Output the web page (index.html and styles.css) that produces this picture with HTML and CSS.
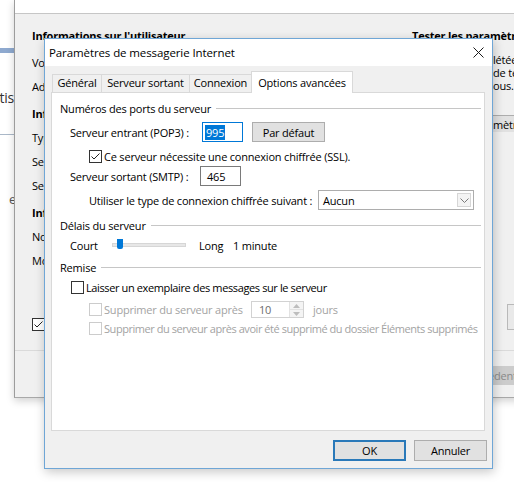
FILE: index.html
```html
<!DOCTYPE html>
<html lang="fr">
<head>
    <meta charset="UTF-8">
    <meta name="viewport" content="width=device-width, initial-scale=1.0">
    <title>Paramètres de messagerie Internet</title>
    <link rel="stylesheet" href="styles.css">
</head>
<body>
    <div class="desk">
        <!-- bits of the window left behind everything -->
        <div class="behind">
            <div class="behind-bar"></div>
            <div class="behind-word">Statis</div>
            <div class="behind-rule"></div>
            <div class="behind-letter">e</div>
        </div>

        <!-- account settings window -->
        <div class="acct">
            <div class="acct-head"></div>
            <div class="acct-body">
                <div class="acct-left">
                    <div class="acct-h first">Informations sur l'utilisateur</div>
                    <div class="acct-row">Votre nom :</div>
                    <div class="acct-row">Adresse de messagerie :</div>
                    <div class="acct-h">Informations sur le serveur</div>
                    <div class="acct-row">Type de compte :</div>
                    <div class="acct-row">Serveur de courrier entrant :</div>
                    <div class="acct-row">Serveur de courrier sortant (SMTP) :</div>
                    <div class="acct-h">Informations de connexion</div>
                    <div class="acct-row">Nom d'utilisateur :</div>
                    <div class="acct-row">Mot de passe :</div>
                    <div class="acct-remember">
                        <span class="box on">
                            <svg width="11" height="11" viewBox="0 0 11 11"><path d="M1.5 5.5L4 8L9.5 2.5" fill="none" stroke="#222" stroke-width="1"/></svg>
                        </span>
                        Mémoriser le mot de passe
                    </div>
                </div>
                <div class="acct-right">
                    <div class="acct-h first">Tester les paramètres du compte</div>
                    <div class="acct-text">
                        <div class="line"><span class="tuck">informations comp</span>létées, nous</div>
                        <div class="line"><span class="tuck">recommandons</span>de tester votre</div>
                        <div class="line"><span class="tuck">bouton ci-dess</span>ous.</div>
                    </div>
                    <div class="acct-btn"><span class="tuck">Tester les para</span>mètres du compte...</div>
                    <div class="acct-more"></div>
                </div>
            </div>
            <div class="acct-foot">
                <div class="acct-btn off"><span class="tuck">&lt; Précé</span>dent</div>
            </div>
        </div>

        <!-- Internet mail settings dialog -->
        <div class="dlg">
            <div class="dlg-title">
                <span>Paramètres de messagerie Internet</span>
                <svg class="close" width="11" height="11" viewBox="0 0 11 11"><path d="M0.5 0.5L10.5 10.5M10.5 0.5L0.5 10.5" stroke="#1a1a1a" stroke-width="1"/></svg>
            </div>
            <div class="dlg-body">
                <div class="tabs">
                    <div class="tab t-general">Général</div>
                    <div class="tab t-smtp">Serveur sortant</div>
                    <div class="tab t-conn">Connexion</div>
                    <div class="tab t-adv active">Options avancées</div>
                </div>

                <div class="panel">
                    <div class="legend">Numéros des ports du serveur</div>

                    <div class="row r-pop">
                        <span class="lbl w-pop">Serveur entrant (POP3) :</span>
                        <span class="field focus"><span class="hl">995</span></span>
                        <span class="btn b-default">Par défaut</span>
                    </div>

                    <div class="check r-ssl">
                        <span class="box on">
                            <svg width="11" height="11" viewBox="0 0 11 11"><path d="M1.5 5.5L4 8L9.5 2.5" fill="none" stroke="#222" stroke-width="1"/></svg>
                        </span>
                        <span>Ce serveur nécessite une connexion chiffrée (SSL).</span>
                    </div>

                    <div class="row r-smtp">
                        <span class="lbl w-smtp">Serveur sortant (SMTP) :</span>
                        <span class="field"><span class="val">465</span></span>
                    </div>

                    <div class="row r-crypt">
                        <span class="lbl w-crypt">Utiliser le type de connexion chiffrée suivant :</span>
                        <span class="combo">
                            <span class="combo-val">Aucun</span>
                            <span class="combo-arrow">
                                <svg width="9" height="5" viewBox="0 0 9 5"><path d="M0.5 0.5L4.5 4.5L8.5 0.5" fill="none" stroke="#7a7a7a" stroke-width="1"/></svg>
                            </span>
                        </span>
                    </div>

                    <div class="legend l-delay">Délais du serveur</div>

                    <div class="row r-slider">
                        <span class="lbl w-court">Court</span>
                        <span class="track"><span class="thumb"></span></span>
                        <span class="lbl w-long">Long</span>
                        <span>1 minute</span>
                    </div>

                    <div class="legend l-remise">Remise</div>

                    <div class="check r-keep">
                        <span class="box"></span>
                        <span class="tight">Laisser un exemplaire des messages sur le serveur</span>
                    </div>

                    <div class="row r-after disabled">
                        <span class="box"></span>
                        <span class="lbl w-after">Supprimer du serveur après</span>
                        <span class="spin">
                            <span class="spin-val">10</span>
                            <span class="spin-btns">
                                <span class="spin-up">
                                    <svg width="7" height="4" viewBox="0 0 7 4"><path d="M0 4L3.5 0L7 4Z" fill="#bdbdbd"/></svg>
                                </span>
                                <span class="spin-down">
                                    <svg width="7" height="4" viewBox="0 0 7 4"><path d="M0 0L3.5 4L7 0Z" fill="#bdbdbd"/></svg>
                                </span>
                            </span>
                        </span>
                        <span class="days">jours</span>
                    </div>

                    <div class="check r-deleted disabled">
                        <span class="box"></span>
                        <span class="tighter">Supprimer du serveur après avoir été supprimé du dossier Éléments supprimés</span>
                    </div>
                </div>

                <div class="actions">
                    <span class="btn b-ok">OK</span>
                    <span class="btn b-cancel">Annuler</span>
                </div>
            </div>
        </div>
    </div>
</body>
</html>
```

FILE: styles.css
```css
body {
    margin: 0;
    padding: 0;
    background-color: #fff;
    font-family: 'Open Sans', 'Noto Sans', sans-serif;
    font-size: 11px;
    letter-spacing: -0.2px;
    color: #000;
}

.desk {
    position: relative;
    width: 514px;
    height: 482px;
    overflow: hidden;
    background-color: #fff;
}

/* window peeking out on the far left */
.behind {
    position: absolute;
    left: 0;
    top: 0;
    width: 14px;
    height: 482px;
}

.behind-bar {
    margin-top: 48px;
    height: 5px;
    background-color: #8ea9cf;
}

.behind-word {
    display: flex;
    justify-content: flex-end;
    margin-top: 37px;
    font-size: 14px;
    line-height: 16px;
    color: #333;
    white-space: nowrap;
}

.behind-rule {
    margin-top: 28px;
    height: 1px;
    background-color: #aab8c8;
}

.behind-letter {
    margin-top: 55px;
    padding-left: 9px;
    font-size: 13px;
    color: #555;
}

/* account settings window */
.acct {
    position: absolute;
    left: 14px;
    top: 0;
    width: 520px;
    height: 398px;
    box-sizing: border-box;
    border-left: 1px solid #9c9c9c;
    border-bottom: 1px solid #a8a8a8;
    background-color: #f0f0f0;
    box-shadow: 0 3px 8px rgba(0, 0, 0, 0.18);
}

.acct-head {
    height: 13px;
    background-color: #fff;
    border-bottom: 1px solid #c6c6c6;
}

.acct-body {
    display: flex;
    height: 336px;
}

.acct-left {
    width: 380px;
    padding-left: 17px;
    padding-top: 15px;
}

.acct-h {
    font-weight: 700;
    height: 24px;
    line-height: 24px;
    margin-top: 3px;
    white-space: nowrap;
}

.acct-h.first {
    height: 14px;
    line-height: 14px;
    margin-top: 0;
    margin-bottom: 8px;
}

.acct-row {
    height: 24px;
    line-height: 24px;
    white-space: nowrap;
}

.acct-remember {
    display: flex;
    align-items: center;
    gap: 4px;
    margin-top: 44px;
    white-space: nowrap;
}

.acct-right {
    width: 120px;
    padding-top: 15px;
}

.acct-text {
    margin-top: 10px;
    line-height: 13px;
}

.line {
    display: flex;
    white-space: nowrap;
}

/* prefix that sits under the dialog: it ends where the visible part begins */
.tuck {
    display: inline-flex;
    justify-content: flex-end;
    width: 81px;
    flex-shrink: 0;
    white-space: nowrap;
}

.acct-btn {
    display: flex;
    align-items: center;
    height: 16px;
    margin-top: 23px;
    background-color: #e1e1e1;
    border-top: 1px solid #adadad;
    white-space: nowrap;
}

.acct-more {
    width: 60px;
    height: 26px;
    margin-top: 172px;
    margin-left: 95px;
    box-sizing: border-box;
    border: 1px solid #b9b9b9;
    background-color: #e9e9e9;
}

.acct-foot {
    border-top: 1px solid #dadada;
    padding-top: 15px;
    padding-left: 398px;
}

.acct-foot .acct-btn {
    margin-top: 0;
    height: 19px;
    border-top: none;
}

.acct-btn.off {
    background-color: #cccccc;
    color: #8a8a8a;
}

/* dialog */
.dlg {
    position: absolute;
    left: 44px;
    top: 38px;
    width: 449px;
    height: 431px;
    box-sizing: border-box;
    border: 1px solid #6fa6d6;
    background-color: #f0f0f0;
    box-shadow: 1px 3px 10px rgba(0, 0, 0, 0.22);
}

.dlg-title {
    display: flex;
    align-items: center;
    justify-content: space-between;
    height: 27px;
    padding: 0 8px 0 4px;
    background-color: #fff;
    font-size: 11.5px;
    letter-spacing: -0.1px;
}

.dlg-body {
    padding: 0 6px;
}

.tabs {
    display: flex;
    align-items: flex-end;
    height: 21px;
    margin-top: 5px;
    margin-left: 1px;
}

.tab {
    position: relative;
    height: 18px;
    line-height: 16px;
    box-sizing: border-box;
    border: 1px solid #d9d9d9;
    border-bottom: none;
    background-color: #f0f0f0;
    text-align: center;
    white-space: nowrap;
}

.tab + .tab {
    margin-left: -1px;
}

.t-general { width: 50px; }
.t-smtp { width: 89px; }
.t-conn { width: 63px; }

.tab.active {
    width: 102px;
    height: 22px;
    line-height: 21px;
    margin-bottom: -1px;
    background-color: #fff;
    z-index: 1;
}

.panel {
    width: 434px;
    height: 339px;
    box-sizing: border-box;
    padding: 8px 3px 0 8px;
    border: 1px solid #d9d9d9;
    background-color: #fff;
}

.legend {
    display: flex;
    align-items: center;
    height: 14px;
    white-space: nowrap;
}

.legend::after {
    content: "";
    flex: 1;
    height: 1px;
    margin-left: 5px;
    background-color: #c6c6c6;
}

.l-delay { margin-top: 8px; }
.l-remise { margin-top: 7px; }

.row {
    display: flex;
    align-items: center;
    white-space: nowrap;
}

.lbl {
    flex-shrink: 0;
}

.r-pop { margin-top: 7px; height: 20px; padding-left: 10px; }
.r-smtp { margin-top: 3px; height: 20px; padding-left: 10px; }
.r-crypt { margin-top: 4px; height: 20px; padding-left: 29px; }
.r-slider { margin-top: 5px; height: 16px; padding-left: 10px; }
.r-after { margin-top: 7px; height: 17px; padding-left: 29px; }

.w-pop { width: 132px; }
.w-smtp { width: 130px; }
.w-crypt { width: 229px; }
.w-court { width: 42px; }
.w-long { width: 34px; margin-left: 13px; }
.w-after { width: 147px; margin-left: 2px; }

.field {
    display: flex;
    align-items: center;
    width: 41px;
    height: 20px;
    box-sizing: border-box;
    padding-left: 2px;
    border: 1px solid #7a7a7a;
    background-color: #fff;
}

.field.focus {
    border-color: #0078d7;
}

.hl {
    padding: 0 1px;
    line-height: 15px;
    background-color: #0078d7;
    color: #fff;
}

.val {
    padding-left: 4px;
}

.btn {
    display: flex;
    align-items: center;
    justify-content: center;
    width: 73px;
    height: 20px;
    box-sizing: border-box;
    border: 1px solid #adadad;
    background-color: #e1e1e1;
    white-space: nowrap;
}

.b-default {
    margin-left: 9px;
}

.check {
    display: flex;
    align-items: center;
    height: 13px;
    white-space: nowrap;
}

.r-ssl { margin-top: 8px; padding-left: 29px; }
.r-keep { margin-top: 7px; padding-left: 11px; }
.r-deleted { margin-top: 4px; padding-left: 29px; }

/* long labels run a little narrower */
.tight { letter-spacing: -0.38px; }
.tighter { letter-spacing: -0.45px; }

.box {
    display: inline-flex;
    align-items: center;
    justify-content: center;
    width: 13px;
    height: 13px;
    box-sizing: border-box;
    flex-shrink: 0;
    border: 1px solid #333;
    background-color: #fff;
}

.check .box {
    margin-right: 2px;
}

.disabled {
    color: #a3a3a3;
}

.disabled .box {
    border-color: #cccccc;
}

.combo {
    display: flex;
    align-items: center;
    justify-content: space-between;
    width: 156px;
    height: 20px;
    box-sizing: border-box;
    border: 1px solid #adadad;
    background-color: #fff;
}

.combo-val {
    padding-left: 4px;
}

.combo-arrow {
    display: flex;
    align-items: center;
    justify-content: center;
    width: 14px;
    height: 14px;
    margin-right: 2px;
    box-sizing: border-box;
    border: 1px solid #d6d6d6;
    background-color: #f4f4f4;
}

.track {
    position: relative;
    width: 74px;
    height: 4px;
    box-sizing: border-box;
    border: 1px solid #d6d6d6;
    background-color: #e7e7e7;
}

/* slider handle sits over the track */
.thumb {
    position: absolute;
    left: 4px;
    top: -5px;
    width: 6px;
    height: 10px;
    background-color: #0078d7;
    border-radius: 0 0 2px 2px;
}

.spin {
    display: flex;
    align-items: stretch;
    width: 53px;
    height: 17px;
    box-sizing: border-box;
    border: 1px solid #d2d2d2;
    background-color: #fff;
}

.spin-val {
    flex: 1;
    display: flex;
    align-items: center;
    padding-left: 7px;
    color: #6d6d6d;
}

.spin-btns {
    display: flex;
    flex-direction: column;
    width: 13px;
    border-left: 1px solid #e2e2e2;
}

.spin-up, .spin-down {
    flex: 1;
    display: flex;
    align-items: center;
    justify-content: center;
    background-color: #f4f4f4;
}

.spin-up {
    border-bottom: 1px solid #e2e2e2;
}

.days {
    margin-left: 9px;
}

.actions {
    display: flex;
    justify-content: flex-end;
    gap: 8px;
    margin-top: 9px;
    margin-right: -1px;
}

.b-ok, .b-cancel {
    height: 21px;
}

.b-ok {
    border: 2px solid #2a79b9;
}
```
